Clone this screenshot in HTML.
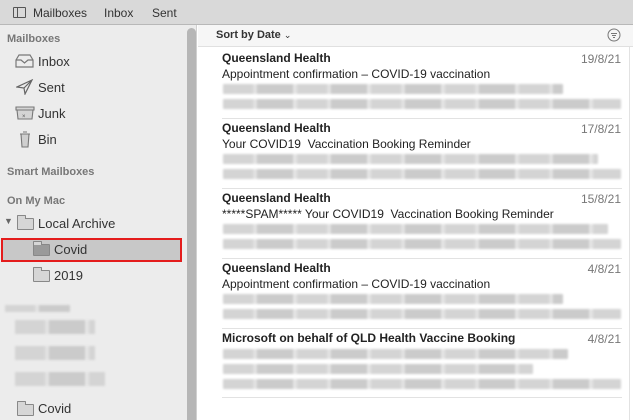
<!DOCTYPE html><html><head><style>
*{margin:0;padding:0;box-sizing:border-box}
body{width:633px;height:420px;overflow:hidden;position:relative;font-family:"Liberation Sans",sans-serif;background:#fff;color:#222}
.a{position:absolute;white-space:nowrap}
.tb{left:0;top:0;width:633px;height:25px;background:#d9d9d9;border-bottom:1px solid #b8b8b8}
.side{left:0;top:25px;width:197px;height:395px;background:#ececec;border-right:1px solid #d0d0d0}
.hd{font-size:11px;color:#777;font-weight:bold}
.it{font-size:13px;color:#333}
.bl{position:absolute;height:10px;background:repeating-linear-gradient(90deg,#d4d4d4 0 30px,#e2e2e2 30px 34px,#cbcbcb 34px 70px,#e4e4e4 70px 74px);filter:blur(1px);border-radius:1px}
.snd{font-size:12px;font-weight:bold;color:#222}
.sub{font-size:12px;color:#222}
.dt{font-size:12px;color:#777;right:12px}
.sep{left:222px;width:400px;height:1px;background:#e2e2e2}
.fold{position:absolute;width:17px;height:12px;border:1px solid #888;background:#d6d6d6;border-radius:1px}
.fold:before{content:"";position:absolute;left:-1px;top:-4px;width:7px;height:3px;border:1px solid #888;border-bottom:none;background:#d6d6d6;border-radius:1px 1px 0 0}
</style></head><body>
<div class="a tb"></div>
<div class="a" style="left:13px;top:7px;width:13px;height:11px;border:1px solid #555;border-radius:1px"><div style="position:absolute;left:3px;top:0;width:1px;height:9px;background:#555"></div></div>
<div class="a" style="left:33px;top:6px;font-size:12px;color:#333">Mailboxes</div>
<div class="a" style="left:104px;top:6px;font-size:12px;color:#333">Inbox</div>
<div class="a" style="left:152px;top:6px;font-size:12px;color:#333">Sent</div>

<div class="a side"></div>
<div class="a" style="left:187px;top:28px;width:9px;height:392px;background:#b6b6b6;border-radius:5px 5px 0 0"></div>
<div class="a hd" style="left:7px;top:33px">Mailboxes</div>
<svg class="a" style="left:15px;top:54px" width="20" height="14"><path d="M1 6 L4 1 H15 L18 6 V13 H1Z M1 6 H6 L9.5 9 L13 6 H18" fill="none" stroke="#777" stroke-width="1.2"/></svg>
<div class="a it" style="left:38px;top:54px">Inbox</div>
<svg class="a" style="left:16px;top:79px" width="18" height="16"><path d="M16 1 L1 8 L8 9 L9 15 Z M8 9 L16 1" fill="none" stroke="#666" stroke-width="1.2"/></svg>
<div class="a it" style="left:38px;top:80px">Sent</div>
<svg class="a" style="left:15px;top:106px" width="20" height="14"><path d="M1 1 H19 V4 H1Z M2 4 L3 13 H17 L18 4" fill="#d4d4d4" stroke="#777" stroke-width="1.1"/><text x="7" y="12" font-size="6" fill="#555">×</text></svg>
<div class="a it" style="left:38px;top:106px">Junk</div>
<svg class="a" style="left:19px;top:131px" width="12" height="17"><path d="M4 1 H8 M1 3 H11 M2 3 L3 16 H9 L10 3" fill="#cfcfcf" stroke="#777" stroke-width="1.1"/></svg>
<div class="a it" style="left:38px;top:132px">Bin</div>
<div class="a hd" style="left:7px;top:166px">Smart Mailboxes</div>
<div class="a hd" style="left:7px;top:195px">On My Mac</div>
<div class="a" style="left:4px;top:216px;font-size:9px;color:#666">▼</div>
<div class="fold" style="left:17px;top:218px"></div>
<div class="a it" style="left:38px;top:216px">Local Archive</div>
<div class="a" style="left:1px;top:238px;width:181px;height:24px;background:#c8c8c8;border:2px solid #e41c1c"></div>
<div class="fold" style="left:33px;top:244px;background:#9a9a9a"></div>
<div class="a it" style="left:54px;top:242px">Covid</div>
<div class="fold" style="left:33px;top:270px"></div>
<div class="a it" style="left:54px;top:268px">2019</div>
<div class="bl" style="left:5px;top:305px;width:65px;height:7px"></div>
<div class="bl" style="left:15px;top:320px;width:80px;height:14px"></div>
<div class="bl" style="left:15px;top:346px;width:80px;height:14px"></div>
<div class="bl" style="left:15px;top:372px;width:90px;height:14px"></div>
<div class="fold" style="left:17px;top:404px"></div>
<div class="a it" style="left:38px;top:401px">Covid</div>

<div class="a" style="left:198px;top:25px;width:435px;height:22px;background:#f6f6f6;border-bottom:1px solid #e0e0e0"></div>
<div class="a" style="left:216px;top:29px;font-size:11px;font-weight:bold;color:#333">Sort by Date <span style="font-weight:normal;font-size:9px">⌄</span></div>
<svg class="a" style="left:607px;top:28px" width="14" height="14"><circle cx="7" cy="7" r="6" fill="none" stroke="#777"/><path d="M4 5.5H10M5 7.5H9M6 9.5H8" stroke="#777"/></svg>
<div class="a" style="left:629px;top:47px;width:1px;height:373px;background:#e2e2e2"></div>

<div class="a snd" style="left:222px;top:51px">Queensland Health</div><div class="a dt" style="top:52px">19/8/21</div>
<div class="a sub" style="left:222px;top:67px">Appointment confirmation – COVID-19 vaccination</div>
<div class="bl" style="left:223px;top:84px;width:340px"></div><div class="bl" style="left:223px;top:99px;width:398px"></div>
<div class="a sep" style="top:118px"></div>
<div class="a snd" style="left:222px;top:121px">Queensland Health</div><div class="a dt" style="top:122px">17/8/21</div>
<div class="a sub" style="left:222px;top:137px">Your COVID19&nbsp; Vaccination Booking Reminder</div>
<div class="bl" style="left:223px;top:154px;width:375px"></div><div class="bl" style="left:223px;top:169px;width:398px"></div>
<div class="a sep" style="top:188px"></div>
<div class="a snd" style="left:222px;top:191px">Queensland Health</div><div class="a dt" style="top:192px">15/8/21</div>
<div class="a sub" style="left:222px;top:207px">*****SPAM***** Your COVID19&nbsp; Vaccination Booking Reminder</div>
<div class="bl" style="left:223px;top:224px;width:385px"></div><div class="bl" style="left:223px;top:239px;width:398px"></div>
<div class="a sep" style="top:258px"></div>
<div class="a snd" style="left:222px;top:261px">Queensland Health</div><div class="a dt" style="top:262px">4/8/21</div>
<div class="a sub" style="left:222px;top:277px">Appointment confirmation – COVID-19 vaccination</div>
<div class="bl" style="left:223px;top:294px;width:340px"></div><div class="bl" style="left:223px;top:309px;width:398px"></div>
<div class="a sep" style="top:328px"></div>
<div class="a snd" style="left:222px;top:331px">Microsoft on behalf of QLD Health Vaccine Booking</div><div class="a dt" style="top:332px">4/8/21</div>
<div class="bl" style="left:223px;top:349px;width:345px"></div><div class="bl" style="left:223px;top:364px;width:310px"></div><div class="bl" style="left:223px;top:379px;width:398px"></div>
<div class="a sep" style="top:397px"></div>
</body></html>
